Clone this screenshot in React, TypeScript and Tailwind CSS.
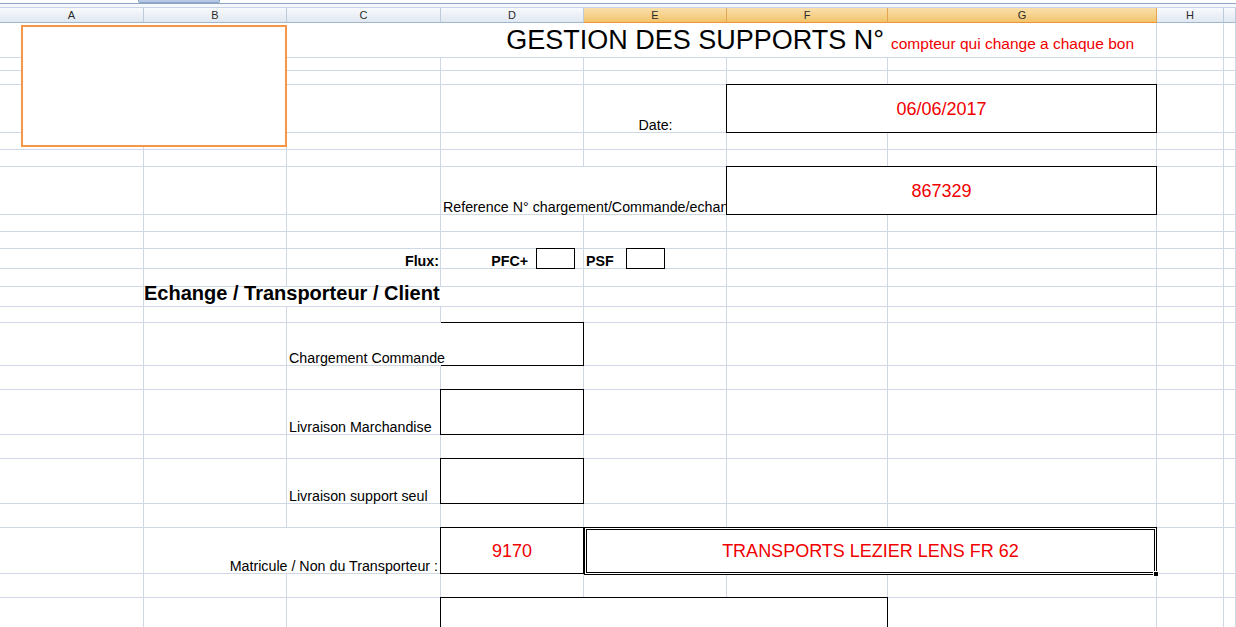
import React from 'react';

// spreadsheet geometry (Excel 2007 look)
const COLS = ['col-start-1', 'col-start-2', 'col-start-3', 'col-start-4', 'col-start-5', 'col-start-6', 'col-start-7', 'col-start-8', 'col-start-9'];
const ROWS = [
    'row-start-1', 'row-start-2', 'row-start-3', 'row-start-4', 'row-start-5', 'row-start-6', 'row-start-7', 'row-start-8',
    'row-start-9', 'row-start-10', 'row-start-11', 'row-start-12', 'row-start-13', 'row-start-14', 'row-start-15', 'row-start-16',
    'row-start-17', 'row-start-18', 'row-start-19', 'row-start-20', 'row-start-21', 'row-start-22',
];

const HEADERS = [
    { label: 'A', selected: false },
    { label: 'B', selected: false },
    { label: 'C', selected: false },
    { label: 'D', selected: false },
    { label: 'E', selected: true },
    { label: 'F', selected: true },
    { label: 'G', selected: true },
    { label: 'H', selected: false },
    { label: '', selected: false },
];

// gridlines hidden where cells are merged or text overflows: "row-col" of the cell whose right edge disappears
const HIDDEN = new Set(['0-0', '0-1', '0-2', '0-3', '0-4', '0-5', '6-3', '11-1', '11-2', '13-2', '19-1']);

const label = 'flex items-end pb-[1px] text-[14.25px] leading-[14px] whitespace-nowrap text-black';
const box = '-ml-px -mt-px border border-black bg-white';
const red = 'text-[18px] leading-[18px] text-[#f00000]';

const App = () => {
    return (
        <div className="w-[1236px] h-[627px] overflow-hidden bg-white font-['Liberation_Sans',Arial,sans-serif]">
            {/* window chrome strip above the headers */}
            <div className="h-[3px] bg-white flex">
                <div className="ml-[138px] w-[82px] h-[3px] bg-[#b5c9e6] border-x border-b border-[#8ea6c6] rounded-b-[2px]" />
            </div>
            <div className="h-px bg-[#8ea6c6]" />
            <div className="h-[3px] bg-[#f6f8fb]" />
            <div className="h-px bg-[#c7d4e4]" />

            {/* column headers */}
            <div className="grid grid-cols-[144px_143px_154px_143px_143px_161px_269px_67px_12px] h-[15px]">
                {HEADERS.map((h, i) => (
                    <div
                        key={i}
                        className={h.selected
                            ? 'flex items-center justify-center border-r border-b border-r-[#e2a552] border-b-[#f29436] bg-linear-to-b from-[#fae0ac] to-[#f2c46a] text-[11px] leading-[11px] text-[#2b2b2b]'
                            : 'flex items-center justify-center border-r border-b border-r-[#bccbdc] border-b-[#9eb6ce] bg-linear-to-b from-[#f8fafc] to-[#e1e8f1] text-[11px] leading-[11px] text-[#2b2b2b]'}
                    >
                        {h.label}
                    </div>
                ))}
            </div>

            {/* sheet */}
            <div className="grid grid-cols-[144px_143px_154px_143px_143px_161px_269px_67px_12px] grid-rows-[35px_13px_14px_48px_17px_17px_48px_17px_17px_20px_18px_20px_16px_43px_24px_45px_24px_45px_24px_46px_24px_45px]">
                {ROWS.map((r, ri) =>
                    COLS.map((c, ci) => (
                        <div
                            key={`${ri}-${ci}`}
                            className={`${r} ${c} border-b border-[#d0d7e5] ${HIDDEN.has(`${ri}-${ci}`) ? '' : 'border-r'}`}
                        />
                    ))
                )}

                {/* logo placeholder shape */}
                <div className="col-start-1 col-span-2 row-start-1 row-span-5 ml-[21px] mt-[2px] mb-[3px] border-2 border-[#f79646] bg-white" />

                {/* title */}
                <div className="col-start-3 col-span-5 row-start-1 flex flex-col justify-end pb-[4px]">
                    <div className="flex items-baseline whitespace-nowrap">
                        <div className="w-[600px] pr-[3px] text-right text-[27px] leading-[27px] text-black">GESTION DES SUPPORTS N°</div>
                        <div className="pl-[4px] text-[15.5px] leading-[15px] text-[#f00000]">compteur qui change a chaque bon</div>
                    </div>
                </div>

                {/* date */}
                <div className={`col-start-5 row-start-4 justify-center ${label}`}>Date:</div>
                <div className={`col-start-6 col-span-2 row-start-4 flex items-center justify-center ${box}`}>
                    <span className={red}>06/06/2017</span>
                </div>

                {/* reference */}
                <div className={`col-start-4 col-span-2 row-start-7 overflow-hidden pl-[2px] ${label}`}>Reference N° chargement/Commande/echan</div>
                <div className={`col-start-6 col-span-2 row-start-7 flex items-center justify-center ${box}`}>
                    <span className={red}>867329</span>
                </div>

                {/* flux */}
                <div className={`col-start-3 row-start-10 justify-end pr-[2px] font-bold ${label}`}>Flux:</div>
                <div className="col-start-4 row-start-10 flex">
                    <div className={`w-[95px] justify-end pr-[8px] font-bold ${label}`}>PFC+</div>
                    <div className="w-[39px] -mt-px border border-black" />
                </div>
                <div className="col-start-5 row-start-10 flex">
                    <div className={`w-[42px] pl-[2px] font-bold ${label}`}>PSF</div>
                    <div className="w-[39px] -mt-px border border-black" />
                </div>

                {/* section */}
                <div className="col-start-2 col-span-3 row-start-12 flex items-end pb-[4px] text-[20px] leading-[20px] font-bold whitespace-nowrap text-black">
                    Echange / Transporteur / Client
                </div>

                <div className="col-start-4 row-start-14 -mt-px border-t border-r border-b border-black bg-white" />
                <div className={`col-start-3 row-start-14 pl-[2px] ${label}`}>Chargement Commande</div>

                <div className={`col-start-4 row-start-16 ${box}`} />
                <div className={`col-start-3 row-start-16 pl-[2px] ${label}`}>Livraison Marchandise</div>

                <div className={`col-start-4 row-start-18 ${box}`} />
                <div className={`col-start-3 row-start-18 pl-[2px] ${label}`}>Livraison support seul</div>

                {/* carrier */}
                <div className={`col-start-2 col-span-2 row-start-20 justify-end pr-[3px] ${label}`}>Matricule / Non du Transporteur :</div>
                <div className={`col-start-4 row-start-20 flex items-center justify-center ${box}`}>
                    <span className={red}>9170</span>
                </div>
                <div className="relative col-start-5 col-span-3 row-start-20 -mt-px -mb-px flex items-center justify-center border-[3px] border-double border-black bg-white">
                    <span className={red}>TRANSPORTS LEZIER LENS FR 62</span>
                    <div className="absolute -right-[5px] -bottom-[5px] w-[6px] h-[6px] bg-black border border-white" />
                </div>

                <div className={`col-start-4 col-span-3 row-start-22 ${box}`} />
            </div>
        </div>
    );
};

export default App;
